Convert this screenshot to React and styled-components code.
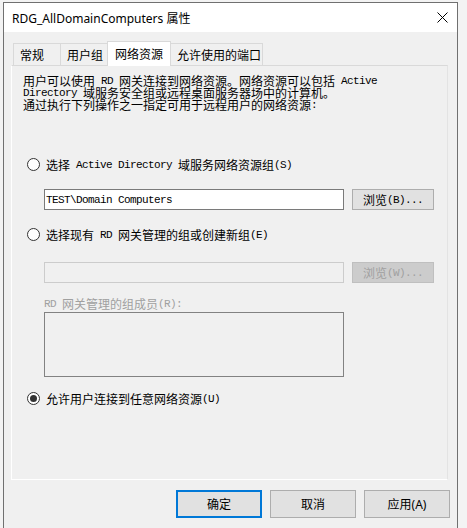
import React from "react";
import styled, { createGlobalStyle } from "styled-components";

const Global = createGlobalStyle`
  html, body { margin: 0; padding: 0; }
  body {
    background: #f3f3f3;
    width: 467px;
    height: 528px;
    overflow: hidden;
    font-family: "Noto Sans CJK SC", sans-serif;
    color: #000;
  }
`;

const Window = styled.div`
  margin: 2px 0 0 3px;
  width: 455px;
  height: 540px;
  box-sizing: border-box;
  border: 1px solid #707070;
  background: #f0f0f0;
  display: flex;
  flex-direction: column;
`;

const TitleBar = styled.div`
  height: 29px;
  background: #fff;
  display: flex;
  align-items: center;
  justify-content: space-between;
  padding-left: 8px;
  font-family: "Noto Sans", "Noto Sans CJK SC", sans-serif;
  font-size: 12px;
  color: #000;
`;

const CloseBtn = styled.div`
  width: 30px;
  height: 29px;
  display: flex;
  align-items: center;
  justify-content: center;
`;

const Body = styled.div`
  flex: 1;
  display: flex;
  flex-direction: column;
  padding: 9px 7px 0 7px;
`;

const TabBar = styled.div`
  display: flex;
  align-items: flex-end;
  height: 24px;
  padding-left: 2px;
  position: relative;
  z-index: 1;
`;

const Tab = styled.div`
  box-sizing: border-box;
  width: ${(p) => p.$w}px;
  height: ${(p) => (p.$active ? 25 : 22)}px;
  margin-left: ${(p) => (p.$first ? 0 : -1)}px;
  margin-bottom: ${(p) => (p.$active ? -1 : 0)}px;
  border: 1px solid #d9d9d9;
  border-bottom: none;
  background: ${(p) => (p.$active ? "#fff" : "#f0f0f0")};
  display: flex;
  align-items: center;
  padding-left: ${(p) => (p.$active ? 7 : 6)}px;
  padding-bottom: ${(p) => (p.$active ? 2 : 0)}px;
  font-size: 12px;
  white-space: nowrap;
  position: relative;
`;

const Panel = styled.div`
  box-sizing: border-box;
  width: 437px;
  height: 415px;
  border: 1px solid #fff;
  border-top-color: #d9d9d9;
  border-right-color: #e3e3e3;
  padding: 9px 11px 0 11px;
  display: flex;
  flex-direction: column;
  align-items: flex-start;
`;

const Line = styled.div`
  height: 12px;
  line-height: 12px;
  font-size: 12px;
  white-space: nowrap;
  display: flex;
  align-items: center;
  color: ${(p) => (p.$disabled ? "#a0a0a0" : "#000")};
  margin-top: ${(p) => p.$mt || 0}px;
  margin-left: ${(p) => p.$ml || 0}px;
`;

const M = styled.span`
  font-family: "Liberation Mono", monospace;
  font-size: 11px;
  line-height: 12px;
  letter-spacing: -0.6px;
  white-space: pre;
`;

const OptionRow = styled.div`
  display: flex;
  align-items: center;
  height: 13px;
  margin-left: 4px;
  margin-top: ${(p) => p.$mt}px;
  gap: 6px;
`;

const Radio = styled.div`
  box-sizing: border-box;
  flex: none;
  width: 13px;
  height: 13px;
  border-radius: 50%;
  border: 1px solid #333;
  background: #fff;
  display: flex;
  align-items: center;
  justify-content: center;
  &::after {
    content: "";
    display: ${(p) => (p.$checked ? "block" : "none")};
    width: 7px;
    height: 7px;
    border-radius: 50%;
    background: #333;
  }
`;

const FieldRow = styled.div`
  display: flex;
  align-items: flex-start;
  margin-left: 21px;
  margin-top: ${(p) => p.$mt}px;
  gap: 8px;
`;

const Input = styled.div`
  box-sizing: border-box;
  width: 300px;
  height: 21px;
  border: 1px solid ${(p) => (p.$disabled ? "#cccccc" : "#7a7a7a")};
  background: ${(p) => (p.$disabled ? "#f0f0f0" : "#fff")};
  display: flex;
  align-items: center;
  padding-left: 1px;
  font-size: 12px;
`;

const SmallButton = styled.div`
  box-sizing: border-box;
  width: 82px;
  height: 21px;
  border: 1px solid ${(p) => (p.$disabled ? "#bfbfbf" : "#adadad")};
  background: ${(p) => (p.$disabled ? "#cccccc" : "#e1e1e1")};
  color: ${(p) => (p.$disabled ? "#a0a0a0" : "#000")};
  display: flex;
  align-items: center;
  justify-content: center;
  font-size: 12px;
  line-height: 12px;
`;

const ListBox = styled.div`
  box-sizing: border-box;
  width: 300px;
  height: 65px;
  margin-left: 21px;
  margin-top: 2px;
  border: 1px solid #828282;
  background: #f0f0f0;
`;

const ButtonRow = styled.div`
  display: flex;
  justify-content: flex-end;
  gap: 8px;
  margin-top: 10px;
`;

const Button = styled.div`
  box-sizing: border-box;
  width: 86px;
  height: 28px;
  border: ${(p) => (p.$default ? "2px solid #0078d7" : "1px solid #adadad")};
  background: #e1e1e1;
  display: flex;
  align-items: center;
  justify-content: center;
  font-family: "Noto Sans", "Noto Sans CJK SC", sans-serif;
  font-size: 12px;
`;

export default function App() {
  return (
    <>
      <Global />
      <Window>
        <TitleBar>
          <span>RDG_AllDomainComputers 属性</span>
          <CloseBtn>
            <svg width="11" height="11" viewBox="0 0 11 11">
              <path d="M0.5 0.5 L10.5 10.5 M10.5 0.5 L0.5 10.5" stroke="#000" strokeWidth="1" />
            </svg>
          </CloseBtn>
        </TitleBar>
        <Body>
          <TabBar>
            <Tab $first $w={48}>常规</Tab>
            <Tab $w={48}>用户组</Tab>
            <Tab $active $w={64}>网络资源</Tab>
            <Tab $w={93}>允许使用的端口</Tab>
          </TabBar>
          <Panel>
            <Line>
              用户可以使用<M> RD </M>网关连接到网络资源。网络资源可以包括<M> Active</M>
            </Line>
            <Line>
              <M>Directory </M>域服务安全组或远程桌面服务器场中的计算机。
            </Line>
            <Line>
              通过执行下列操作之一指定可用于远程用户的网络资源<M>:</M>
            </Line>

            <OptionRow $mt={47}>
              <Radio />
              <Line>
                选择<M> Active Directory </M>域服务网络资源组<M>(S)</M>
              </Line>
            </OptionRow>
            <FieldRow $mt={18}>
              <Input>
                <M>TEST\Domain Computers</M>
              </Input>
              <SmallButton>
                浏览<M>(B)...</M>
              </SmallButton>
            </FieldRow>

            <OptionRow $mt={18}>
              <Radio />
              <Line>
                选择现有<M> RD </M>网关管理的组或创建新组<M>(E)</M>
              </Line>
            </OptionRow>
            <FieldRow $mt={21}>
              <Input $disabled />
              <SmallButton $disabled>
                浏览<M>(W)...</M>
              </SmallButton>
            </FieldRow>
            <Line $disabled $mt={15} $ml={21}>
              <M>RD </M>网关管理的组成员<M>(R):</M>
            </Line>
            <ListBox />

            <OptionRow $mt={15}>
              <Radio $checked />
              <Line>
                允许用户连接到任意网络资源<M>(U)</M>
              </Line>
            </OptionRow>
          </Panel>
          <ButtonRow>
            <Button $default>确定</Button>
            <Button>取消</Button>
            <Button>应用(A)</Button>
          </ButtonRow>
        </Body>
      </Window>
    </>
  );
}
